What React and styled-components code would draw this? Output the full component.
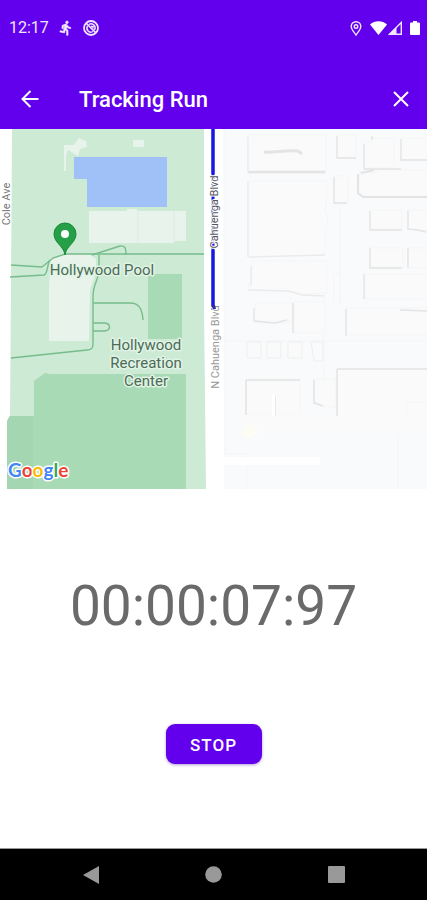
import React from "react";
import styled, { createGlobalStyle } from "styled-components";

const GlobalStyle = createGlobalStyle`
  * { box-sizing: border-box; }
  body {
    margin: 0;
    background: #ffffff;
    font-family: Roboto, "Liberation Sans", sans-serif;
  }
`;

const Screen = styled.div`
  display: flex;
  flex-direction: column;
  min-height: 100vh;
`;

const Header = styled.header`
  background: #6200ee;
  color: #ffffff;
`;

const StatusBar = styled.div`
  display: flex;
  align-items: center;
  justify-content: space-between;
  height: 56px;
  padding: 0 7px 0 9px;
`;

const StatusGroup = styled.div`
  display: flex;
  align-items: center;
  gap: ${({ $gap }) => $gap}px;

  svg { display: block; }
`;

const Clock = styled.time`
  font-size: 16px;
  line-height: 20px;
  color: #efe5fd;
`;

const Toolbar = styled.div`
  display: flex;
  align-items: center;
  padding: 12px 8px 0;
  height: 73px;
`;

const IconButton = styled.button`
  display: grid;
  place-items: center;
  width: 36px;
  height: 44px;
  padding: 0;
  border: 0;
  background: none;
  color: inherit;
  cursor: pointer;
`;

const BackButton = styled(IconButton)`
  width: 44px;
`;

const Title = styled.h1`
  flex: 1;
  margin: 0;
  padding: 2px 0 0 27px;
  font-size: 22px;
  line-height: 28px;
  font-weight: 500;
`;

const MapDrawing = styled.svg`
  display: block;
  width: 100%;
  height: auto;
`;

const PlaceLabel = styled.text`
  font-size: 15px;
  fill: #4c6b57;
  stroke: #e0f3e5;
  stroke-width: 3px;
  stroke-linejoin: round;
  paint-order: stroke;
  text-anchor: middle;
`;

const StreetLabel = styled.text`
  font-size: 11px;
  fill: ${({ $color }) => $color};
  stroke: #ffffff;
  stroke-width: 2px;
  paint-order: stroke;
  text-anchor: middle;
`;

const LogoText = styled.text`
  font-family: Lato, sans-serif;
  font-size: 19px;
  font-weight: 700;
  stroke: #ffffff;
  stroke-width: 3px;
  stroke-linejoin: round;
  paint-order: stroke;
`;

const Panel = styled.main`
  flex: 1;
  display: flex;
  flex-direction: column;
  align-items: center;
  gap: 85px;
  padding: 84px 16px;
`;

const Timer = styled.div`
  font-size: 55px;
  line-height: 66px;
  font-weight: 400;
  color: #6a6a6a;
`;

const StopButton = styled.button`
  min-width: 96px;
  height: 40px;
  padding: 2px 16px 0;
  border: 0;
  border-radius: 9px;
  background: #6200ee;
  box-shadow: 0 1px 3px rgba(60, 0, 150, 0.4);
  color: #ffffff;
  font-family: inherit;
  font-size: 17px;
  line-height: 20px;
  font-weight: 500;
  letter-spacing: 1px;
  cursor: pointer;
`;

const NavBar = styled.nav`
  display: flex;
  align-items: center;
  justify-content: center;
  gap: 87px;
  height: 52px;
  border-top: 1px solid #999999;
  background: #000000;
  color: #999999;
`;

const Buildings = () => (
  <>
    <g fill="#fafafa" stroke="#f4f5f6" strokeWidth="1">
      <path d="M248 135h78v38h-78z" />
      <path d="M248 181h79v18l-2 10 3 11-3 14v21l-77 2z" />
      <path d="M252 261h75v32l-24 1-14-3-40-1v-7h3z" />
      <path d="M337 135h19v23h-19zM334 176h14v28h-14zM334 273h6v31h-6z" />
      <path d="M364 142h8v-4h22v30h-30zM401 138h30v22h-30z" />
      <path d="M360 172l15 1 6-3h48v26h-67l-4-3z" />
      <path d="M370 210h32v20h-32zM408 210h24v20h-24zM370 248h33v20h-33zM408 248h24v20h-24z" />
      <path d="M365 274h64v25h-64zM346 308h85v27h-85z" />
      <path d="M256 303h36v17l-6 3h-32v-11z" />
      <path d="M294 302h31v31h-31z" />
      <path d="M247 342h14v16h-14zM267 342h14v16h-14zM288 342h14v16h-14zM311 342h12v19h-9z" stroke="#eeefef" />
      <path d="M246 380h54v35h-54zM314 379h22v28h-9l-13-5z" />
      <path d="M337 369h94v63H246v-17h91z" stroke="none" />
      <path d="M407 415v-13h24" />
    </g>
    <g fill="none" stroke="#e4e4e4" strokeWidth="1.3">
      <path d="M248 172h77" strokeWidth="2.5" />
      <path d="M264 152c10 1 20-2 34-1l4 3" strokeWidth="3" />
      <path d="M248 137v35M248 182v75M249 257l76-2M251 266v20M248 290l40 1 14 4 22 1" stroke="#ebebeb" />
      <path d="M337 136v22h19M334 177v26h13M364 144v25h37M372 136v4M401 139v21h28" />
      <path d="M358 174v19l5 4h66M361 173l13-3" strokeWidth="2" />
      <path d="M370 211v19h32M408 211v18l10 1 8 2M370 248v20h32M408 248v20M364 274v25" />
      <path d="M293 303v30M254 308v13l21 2 12-3M346 309v27M400 310l27 1" />
      <path d="M246 380h54M246 380v35M275 396v20M314 380v23l9 3M337 369v47M337 369h94" strokeWidth="1.5" />
    </g>
    <path d="M272 395h3v21h-3z" fill="#ffffff" />
    <path d="M246 424l8 1 4 8-11 6-5-5z" fill="#fefdf5" />
  </>
);

const RunMap = () => (
  <MapDrawing viewBox="0 129 427 360" role="img" aria-label="Map of the current run">
    <path d="M0 129h427v360H0z" fill="#ffffff" />
    <path d="M223 129h204v360H224V465h96v-7h-96z" fill="#f8fafc" />
    <path d="M225 130v324h22v8M247 466v23M340 206v98M324 290v120M224 341h203M398 435v53" fill="none" stroke="#f3f5f7" />
    <Buildings />
    <path d="M224 457h96v8h-96z" fill="#ffffff" />

    <path d="M12 129h192v176l2 184H7v-68l3-6 1-130z" fill="#cdead5" />
    <path d="M34 381l11-8 5 1h136v115H7v-68l3-5h24z" fill="#a8dab5" />
    <path d="M7 421l3-5h23v73H7z" fill="#a3d6b1" />
    <path d="M148 274h34v65h-34z" fill="#a8dab5" />
    <g fill="#e8f3eb">
      <path d="M64 145h10l5-7 7 3 1 6-7 2-2 7-10-6-2 5v16h-2z" />
      <path d="M133 140h11v7h-11z" />
      <path d="M89 211h38v-2h10v2h49v30h-12v2H89z" />
      <path d="M51 258l10-4h28l7 5v13l-2 6-4 12-1 51H49v-56z" />
    </g>
    <path d="M138 212v31M174 212v31" stroke="#dcebe0" fill="none" />
    <path d="M74 157h93v50H87v-28H74z" fill="#a0c1f8" />
    <g fill="none" stroke="#77bd8b" strokeWidth="1.4" strokeLinejoin="round">
      <path d="M11 265l31 2 11-9 12-4h139" />
      <path d="M10 277l34-2c4-1 3-11 6-15" />
      <path d="M92 255l28-9c6-1 6 4 6 9" />
      <path d="M99 255v17c-1 8-6 12-6 25v47c0 5-2 6-6 6l-76 8" />
      <path d="M93 303h37c8 0 12 4 13 17" />
      <path d="M93 323h12c6 1 6 7 0 8H93" />
    </g>
    <path d="M65 255c-1-9-11-12-11-21a11 11 0 0 1 22 0c0 9-10 12-11 21z" fill="#25a047" stroke="#17883a" />
    <circle cx="65" cy="234" r="4" fill="#ffffff" />

    <path d="M213 129v181" stroke="#1616e6" strokeWidth="3" />
    <StreetLabel $color="#777777" transform="translate(10 204) rotate(-90)">Cole Ave</StreetLabel>
    <StreetLabel $color="#55555f" transform="translate(218 212) rotate(-90)">Cahuenga Blvd</StreetLabel>
    <StreetLabel $color="#999999" transform="translate(219 347) rotate(-90)">N Cahuenga Blvd</StreetLabel>
    <path d="M213 129v45M213 250v56" stroke="#1616e6" strokeWidth="3" />
    <path d="M211 305h4l1 4h-3z" fill="#3328a0" />

    <PlaceLabel x="102" y="275">Hollywood Pool</PlaceLabel>
    <PlaceLabel x="146" y="350">Hollywood</PlaceLabel>
    <PlaceLabel x="146" y="368">Recreation</PlaceLabel>
    <PlaceLabel x="146" y="386">Center</PlaceLabel>
    <LogoText x="8" y="477">
      <tspan fill="#4285f4">G</tspan>
      <tspan fill="#ea4335">o</tspan>
      <tspan fill="#fbbc05">o</tspan>
      <tspan fill="#4285f4">g</tspan>
      <tspan fill="#34a853">l</tspan>
      <tspan fill="#ea4335">e</tspan>
    </LogoText>
  </MapDrawing>
);

const RunnerIcon = () => (
  <svg width="16" height="18" viewBox="0 0 24 24" fill="#f0e6fd" stroke="#f0e6fd" aria-hidden="true">
    <path d="M13.49 5.48c1.1 0 2-.9 2-2s-.9-2-2-2-2 .9-2 2 .9 2 2 2zm-3.6 13.9l1-4.4 2.1 2v6h2v-7.5l-2.1-2 .6-3c1.3 1.5 3.3 2.5 5.5 2.5v-2c-1.9 0-3.5-1-4.3-2.4l-1-1.6c-.4-.6-1-1-1.7-1-.3 0-.5.1-.8.1l-5.2 2.2v4.7h2v-3.4l1.8-.7-1.6 8.1-4.9-1-.4 2 7 1.4z" />
  </svg>
);

const DisabledTargetIcon = () => (
  <svg width="16" height="16" viewBox="0 0 16 16" fill="none" stroke="#f0e6fd" aria-hidden="true">
    <circle cx="8" cy="8" r="7" strokeWidth="1.8" />
    <path d="M3 3l10 10" strokeWidth="1.7" />
    <path d="M6 4.5A4 4 0 0 1 11.5 10M4.5 6a4 4 0 0 0 5.5 5.5M8 6.5h2v2" strokeWidth="1.4" />
  </svg>
);

const LocationIcon = () => (
  <svg width="12" height="15" viewBox="0 0 12 15" fill="none" stroke="#f0e6fd" strokeWidth="1.4" aria-hidden="true">
    <path d="M6 14C4 11 1.2 8.5 1.2 5.5a4.8 4.8 0 0 1 9.6 0C10.8 8.5 8 11 6 14z" />
    <circle cx="6" cy="5.5" r="1.8" />
  </svg>
);

const WifiIcon = () => (
  <svg width="17" height="14" viewBox="0 0 17 14" fill="#ffffff" aria-hidden="true">
    <path d="M0 3.5C5 -.8 12 -.8 17 3.5L8.5 14z" />
  </svg>
);

const SignalIcon = () => (
  <svg width="14" height="14" viewBox="0 0 14 14" aria-hidden="true">
    <path d="M1.5 13.3L13.3 1.5v11.8z" fill="none" stroke="#f0e6fd" strokeWidth="1.4" />
    <path d="M1 13.5L8.5 6v7.5z" fill="#f0e6fd" />
  </svg>
);

const BatteryIcon = () => (
  <svg width="10" height="14" viewBox="0 0 10 14" fill="#ffffff" aria-hidden="true">
    <path d="M3 0h4v1.5h2a1 1 0 0 1 1 1V13a1 1 0 0 1-1 1H1a1 1 0 0 1-1-1V2.5a1 1 0 0 1 1-1h2z" />
  </svg>
);

export default function App() {
  return (
    <>
      <GlobalStyle />
      <Screen>
        <Header>
          <StatusBar>
            <StatusGroup $gap={9}>
              <Clock>12:17</Clock>
              <RunnerIcon />
              <DisabledTargetIcon />
            </StatusGroup>
            <StatusGroup $gap={8}>
              <LocationIcon />
              <StatusGroup $gap={1}>
                <WifiIcon />
                <SignalIcon />
              </StatusGroup>
              <BatteryIcon />
            </StatusGroup>
          </StatusBar>
          <Toolbar>
            <BackButton type="button" aria-label="Back">
              <svg width="18" height="18" viewBox="0 0 18 18" fill="none" stroke="currentColor" strokeWidth="2">
                <path d="M17.5 9H1.5M9.5 1L1.5 9l8 8" />
              </svg>
            </BackButton>
            <Title>Tracking Run</Title>
            <IconButton type="button" aria-label="Close">
              <svg width="16" height="16" viewBox="0 0 16 16" fill="none" stroke="currentColor" strokeWidth="2">
                <path d="M1 1l14 14M15 1L1 15" />
              </svg>
            </IconButton>
          </Toolbar>
        </Header>
        <RunMap />
        <Panel>
          <Timer role="timer">00:00:07:97</Timer>
          <StopButton type="button">STOP</StopButton>
        </Panel>
        <NavBar aria-label="System navigation">
          <IconButton type="button" aria-label="Back">
            <svg width="18" height="18" viewBox="0 0 18 18" fill="currentColor">
              <path d="M1 9L17 0v18z" />
            </svg>
          </IconButton>
          <IconButton type="button" aria-label="Home">
            <svg width="17" height="17" viewBox="0 0 17 17" fill="currentColor">
              <circle cx="8.5" cy="8.5" r="8.3" />
            </svg>
          </IconButton>
          <IconButton type="button" aria-label="Recent apps">
            <svg width="17" height="17" viewBox="0 0 17 17" fill="currentColor">
              <rect width="17" height="17" rx="1" />
            </svg>
          </IconButton>
        </NavBar>
      </Screen>
    </>
  );
}
